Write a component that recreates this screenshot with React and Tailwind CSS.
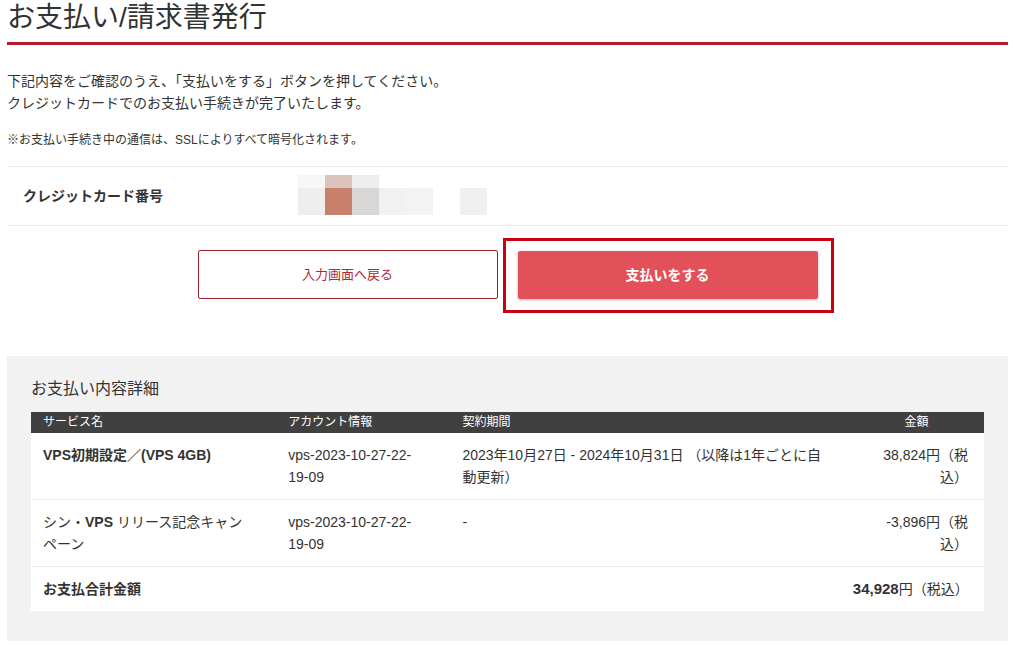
import React from 'react'

const font = { fontFamily: '"Liberation Sans", "Noto Sans CJK JP", sans-serif' }

// mosaic blocks standing in for the masked card number
const topBlocks = ['#f7f7f7', '#dcc3bb', '#eeeeee', '#ffffff', '#ffffff', '#ffffff', '#ffffff']
const bottomBlocks = ['#eeeeee', '#c9806a', '#d9d6d6', '#f1f1f1', '#f3f3f3', '#ffffff', '#f0f0f0']

const rows = [
  {
    service: <span className="font-bold">VPS初期設定／(VPS 4GB)</span>,
    account: 'vps-2023-10-27-22-19-09',
    period: '2023年10月27日 - 2024年10月31日 （以降は1年ごとに自動更新）',
    amount: '38,824円（税込）',
  },
  {
    service: (
      <>
        シン・<span className="font-bold">VPS</span> リリース記念キャンペーン
      </>
    ),
    account: 'vps-2023-10-27-22-19-09',
    period: '-',
    amount: '-3,896円（税込）',
  },
]

export default function App() {
  return (
    <div className="bg-white text-[#333] px-[7px] pb-[7px] w-[1015px]" style={font}>
      {/* Title */}
      <h1 className="text-[28px] leading-[36px] pt-0 pb-[6px] font-normal text-[#333] border-b-[3px] border-[#b71c2c]">
        お支払い/請求書発行
      </h1>

      <div className="pt-[25px] text-[14px] leading-[22px]">
        <p>下記内容をご確認のうえ、「支払いをする」ボタンを押してください。</p>
        <p>クレジットカードでのお支払い手続きが完了いたします。</p>
      </div>
      <p className="mt-[17px] text-[12px] leading-[18px]">※お支払い手続き中の通信は、SSLによりすべて暗号化されます。</p>

      {/* Card number row */}
      <div className="mt-[17px] border-y border-[#eeeeee] h-[60px] flex items-center">
        <div className="w-[291px] pl-[16px] text-[14px] font-bold">クレジットカード番号</div>
        <div className="flex flex-col self-start mt-[8px]">
          <div className="flex h-[13px]">
            {topBlocks.map((c, i) => (
              <div key={i} className="w-[27px] h-full" style={{ backgroundColor: c }} />
            ))}
          </div>
          <div className="flex h-[27px]">
            {bottomBlocks.map((c, i) => (
              <div key={i} className="w-[27px] h-full" style={{ backgroundColor: c }} />
            ))}
          </div>
        </div>
      </div>

      {/* Buttons */}
      <div className="flex justify-center gap-[20px] pt-[24px]">
        <button className="w-[300px] h-[49px] border border-[#9b1f24] bg-white text-[#b22a2e] text-[13px] rounded-[2px]">
          入力画面へ戻る
        </button>
        <div className="relative">
          <button className="w-[300px] h-[48px] mt-px bg-[#e25159] text-white text-[14px] font-bold rounded-[2px] shadow-[0_1px_3px_rgba(0,0,0,0.3)]">
            支払いをする
          </button>
          <div className="absolute -left-[15px] -top-[12px] -right-[16px] -bottom-[14px] border-[3px] border-[#c8000f]" />
        </div>
      </div>

      {/* Details panel */}
      <div className="mt-[57px] bg-[#f2f2f2] px-[24px] pt-[21px] pb-[30px]">
        <h2 className="text-[16px] leading-[24px] font-normal text-[#333]">お支払い内容詳細</h2>
        <table className="mt-[11px] w-full table-fixed border-collapse text-[14px] leading-[22px]">
          <colgroup>
            <col className="w-[245px]" />
            <col className="w-[174px]" />
            <col className="w-[398px]" />
            <col className="w-[135px]" />
          </colgroup>
          <thead>
            <tr className="bg-[#404040] text-white text-[12px] leading-[21px]">
              <th className="text-left font-normal px-[12px]">サービス名</th>
              <th className="text-left font-normal px-[12px]">アカウント情報</th>
              <th className="text-left font-normal px-[12px]">契約期間</th>
              <th className="text-center font-normal px-[12px]">金額</th>
            </tr>
          </thead>
          <tbody className="bg-white">
            {rows.map((r, i) => (
              <tr key={i} className="border-b border-[#eeeeee] align-top">
                <td className="pl-[12px] pr-[30px] py-[11px] h-[65px]">{r.service}</td>
                <td className="pl-[12px] pr-[24px] py-[11px]">{r.account}</td>
                <td className="pl-[12px] pr-[20px] py-[11px]">{r.period}</td>
                <td className="pl-[24px] pr-[16px] py-[11px] text-right">{r.amount}</td>
              </tr>
            ))}
            <tr>
              <td className="px-[12px] py-[11px] font-bold">お支払合計金額</td>
              <td />
              <td />
              <td className="pl-[4px] pr-[16px] py-[11px] text-right whitespace-nowrap">
                <span className="font-bold text-[15px]">34,928</span>円（税込）
              </td>
            </tr>
          </tbody>
        </table>
      </div>
    </div>
  )
}
